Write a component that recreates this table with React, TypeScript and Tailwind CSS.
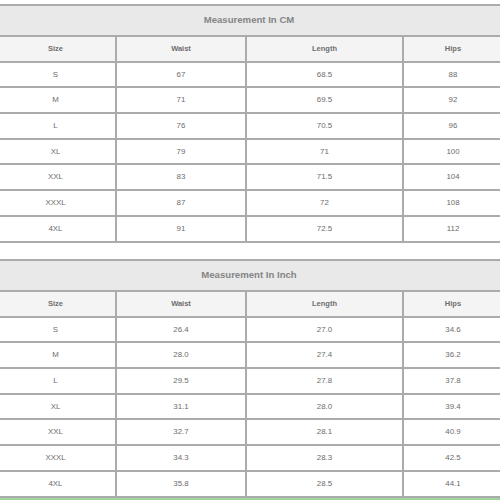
import React from "react";

type SizeRow = [string, string, string, string];

const cmRows: SizeRow[] = [
  ["S", "67", "68.5", "88"],
  ["M", "71", "69.5", "92"],
  ["L", "76", "70.5", "96"],
  ["XL", "79", "71", "100"],
  ["XXL", "83", "71.5", "104"],
  ["XXXL", "87", "72", "108"],
  ["4XL", "91", "72.5", "112"],
];

const inchRows: SizeRow[] = [
  ["S", "26.4", "27.0", "34.6"],
  ["M", "28.0", "27.4", "36.2"],
  ["L", "29.5", "27.8", "37.8"],
  ["XL", "31.1", "28.0", "39.4"],
  ["XXL", "32.7", "28.1", "40.9"],
  ["XXXL", "34.3", "28.3", "42.5"],
  ["4XL", "35.8", "28.5", "44.1"],
];

const headers = ["Size", "Waist", "Length", "Hips"];

const SizeTable = ({ title, rows }: { title: string; rows: SizeRow[] }) => {
  return (
    <div className="-ml-[6px] w-[510px] shrink-0 bg-[#ababab] p-[2px] grid grid-cols-[119px_128px_155px_98px] grid-rows-[29px_repeat(8,23.7px)] gap-[2px]">
      <div className="col-span-4 bg-[#e9e9e9] flex items-center justify-center text-[9.6px] font-bold text-[#858585]">
        {title}
      </div>
      {headers.map((h) => (
        <div
          key={h}
          className="bg-[#f4f4f4] flex items-center justify-center text-[7.5px] font-semibold text-[#6e6e6e]"
        >
          {h}
        </div>
      ))}
      {rows.map((row) =>
        row.map((cell, i) => (
          <div
            key={row[0] + i}
            className="bg-white flex items-center justify-center text-[7.9px] text-[#6c6c6c]"
          >
            {cell}
          </div>
        ))
      )}
    </div>
  );
};

export default function App() {
  return (
    <div
      className="w-[500px] h-[500px] overflow-hidden bg-white pt-[4px] flex flex-col"
      style={{ fontFamily: '"Liberation Sans", Arial, sans-serif' }}
    >
      <SizeTable title="Measurement In CM" rows={cmRows} />
      <div className="h-[16.5px] shrink-0" />
      <SizeTable title="Measurement In Inch" rows={inchRows} />
      <div className="mt-auto h-[3px] bg-[#9fd49b] shrink-0" />
    </div>
  );
}
